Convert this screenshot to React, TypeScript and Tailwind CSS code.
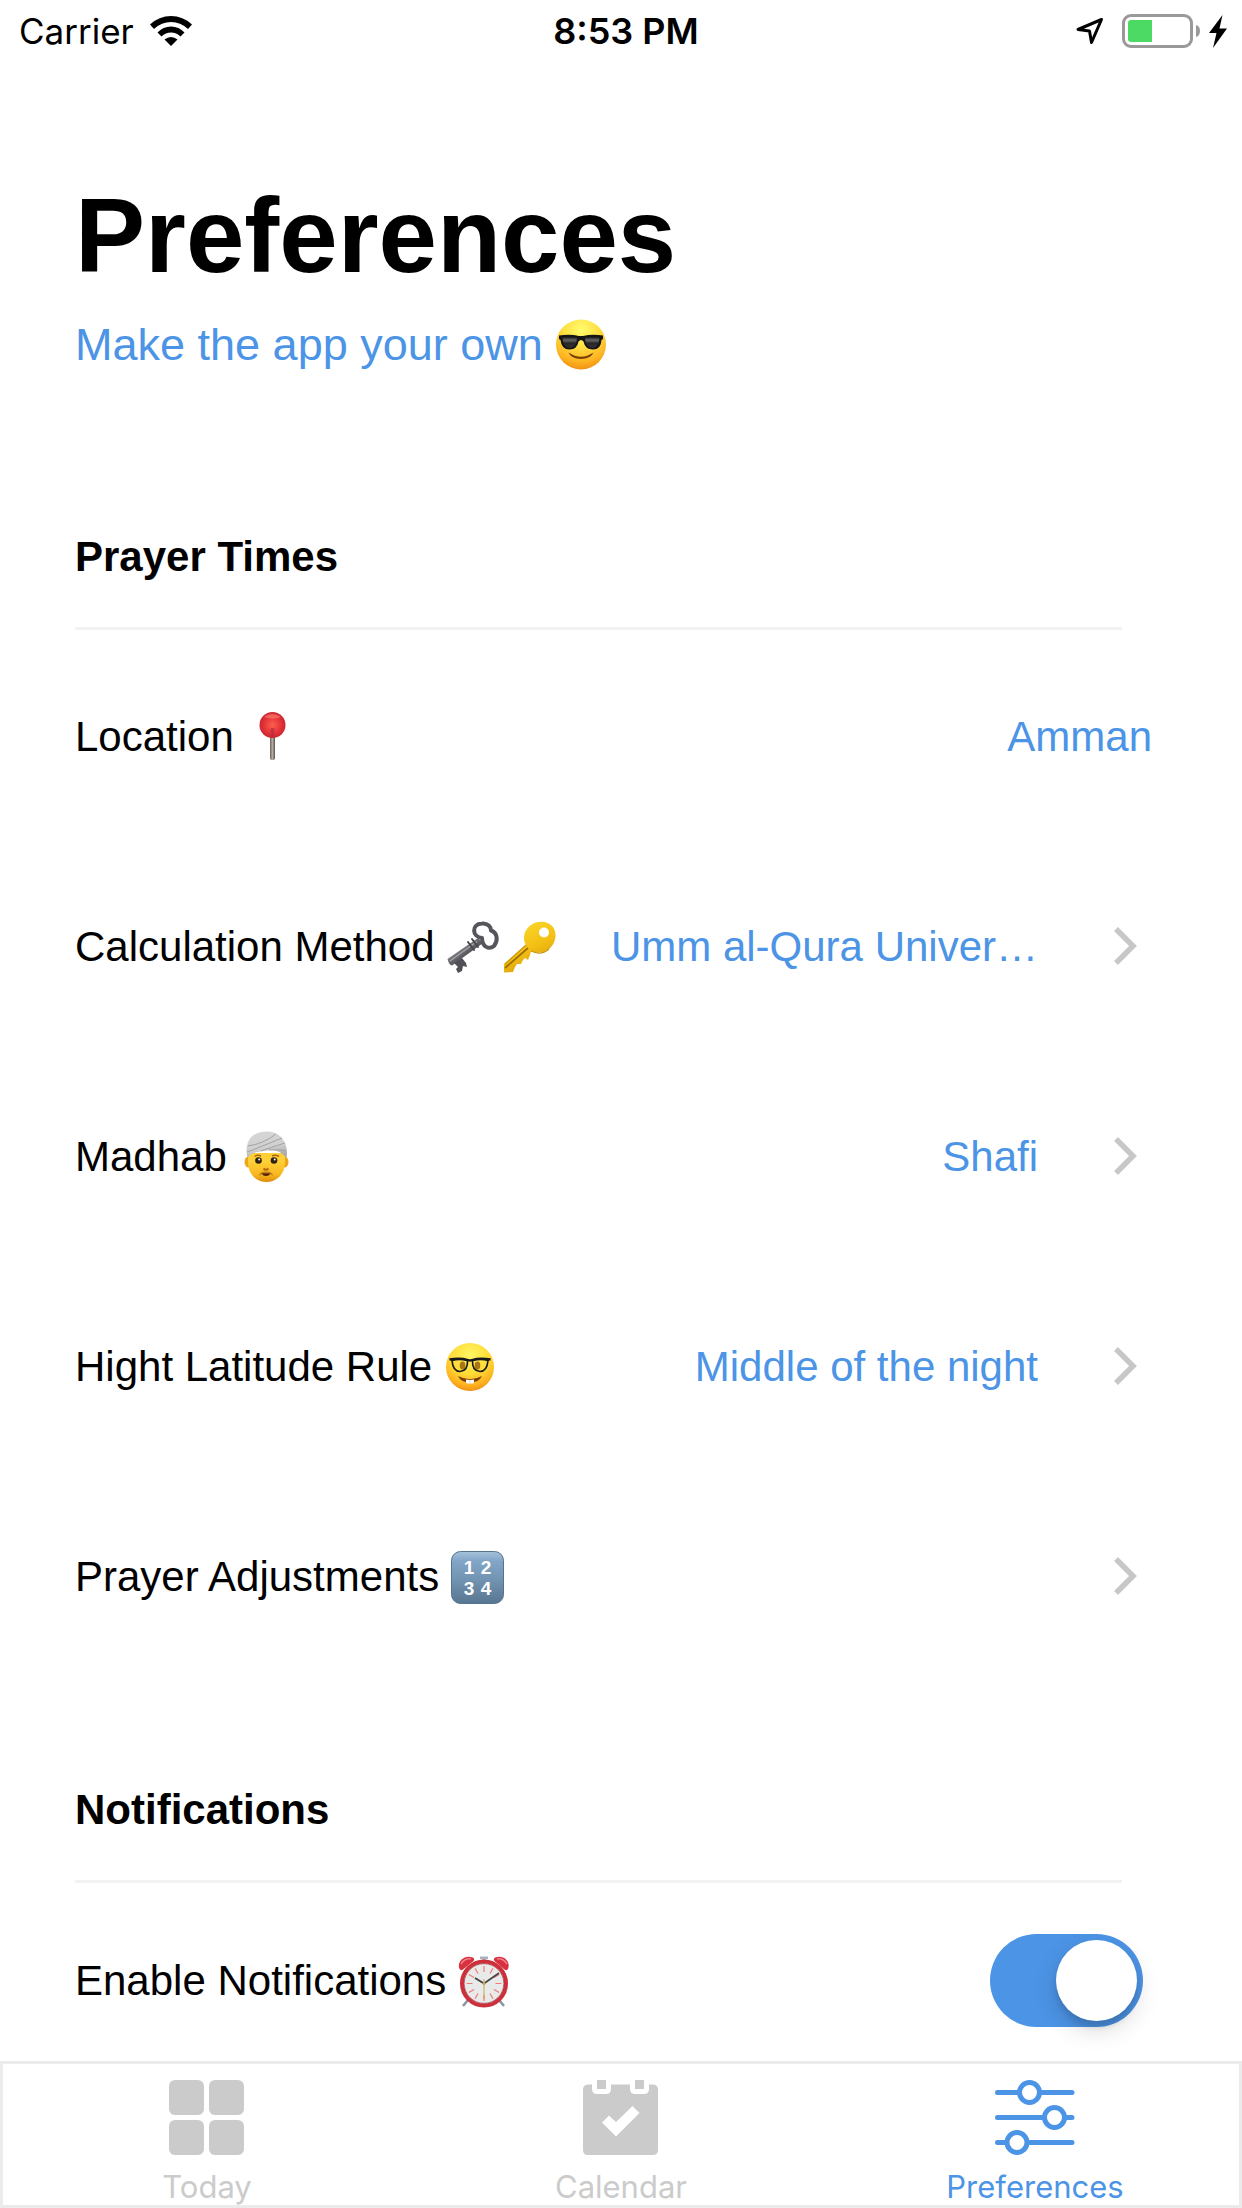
import { useState } from "react";
import type { ReactNode } from "react";

const emojiClass = "h-[52px] w-[52px] shrink-0 overflow-visible";

function Sunglasses() {
  return (
    <svg viewBox="0 0 52 52" className={emojiClass} role="img" aria-label="Smiling face with sunglasses">
      <defs>
        <radialGradient id="sunFace" cx="0.5" cy="0.2" r="0.85">
          <stop offset="0" stopColor="#fffb6e" />
          <stop offset="0.4" stopColor="#ffe043" />
          <stop offset="0.75" stopColor="#fdb522" />
          <stop offset="1" stopColor="#f0860f" />
        </radialGradient>
        <linearGradient id="sunLens" x1="0" y1="0" x2="0" y2="1">
          <stop offset="0" stopColor="#111" />
          <stop offset="0.3" stopColor="#666" />
          <stop offset="0.6" stopColor="#262626" />
          <stop offset="1" stopColor="#333" />
        </linearGradient>
      </defs>
      <circle cx="26" cy="25.500" r="25" fill="url(#sunFace)" />
      <path d="M13.500 33.500Q26 42 38.500 33.500Q36 40 26 40T13.500 33.500Z" fill="#7a3d05" />
      <path d="M4 16.500Q15 14.800 24 17h4Q37 14.800 48 16.500V20l-1.500 1Q46 30.500 38 30.500Q30 30.500 28.500 22.500Q26 19.500 23.500 22.500Q22 30.500 14.500 30.500Q6.500 30.500 5.500 21L4 20Z" fill="#151515" />
      <path d="M7.500 18.500Q15 16.800 22 19Q21.500 28.800 14.500 28.800Q8 28.800 7.500 18.500Z" fill="url(#sunLens)" />
      <path d="M30 19Q37 16.800 44.500 18.500Q44 28.800 37.500 28.800Q30.500 28.800 30 19Z" fill="url(#sunLens)" />
    </svg>
  );
}

function Pin() {
  return (
    <svg viewBox="0 0 52 52" className={emojiClass} role="img" aria-label="Round pushpin">
      <defs>
        <radialGradient id="pinHead" cx="0.5" cy="0.5" r="0.55">
          <stop offset="0" stopColor="#f9604f" />
          <stop offset="0.5" stopColor="#ea3a3a" />
          <stop offset="1" stopColor="#c6202f" />
        </radialGradient>
        <linearGradient id="pinStem" x1="0" x2="1">
          <stop offset="0" stopColor="#6d625a" />
          <stop offset="0.5" stopColor="#b5aaa2" />
          <stop offset="1" stopColor="#5b5049" />
        </linearGradient>
      </defs>
      <rect x="24" y="24" width="5" height="25" rx="2" fill="url(#pinStem)" />
      <circle cx="26.500" cy="14" r="13" fill="url(#pinHead)" />
      <path d="M18 6Q26 0 35 6Q27 9 18 6Z" fill="#ff8b80" opacity="0.55" />
      <rect x="24.500" y="17" width="4" height="9" rx="1.500" fill="#b0283c" opacity="0.6" />
    </svg>
  );
}

function OldKey() {
  return (
    <svg viewBox="0 0 52 52" className={emojiClass} role="img" aria-label="Old key">
      <defs>
        <linearGradient id="oldKeyShaft" x1="0" y1="0" x2="1" y2="1">
          <stop offset="0.3" stopColor="#8b8b90" />
          <stop offset="0.7" stopColor="#3c3c41" />
        </linearGradient>
      </defs>
      <path d="M35 17C25 16 24 3 35 2.500C41 2 44 6 44 9.500C51 12 51 20 47 25C42 29 35 26 35 17Z" fill="none" stroke="#55555b" strokeWidth="4" strokeLinejoin="round" />
      <path d="M0.500 38L31 17L36 22L5 44.500Q2 44 0.500 38Z" fill="url(#oldKeyShaft)" />
      <path d="M3 40L30 20.500" stroke="#a5a5aa" strokeWidth="1.300" />
      <path d="M7 42L15 37L19 42L20 46L16 45L15 50L11 52L9 48L11 46Z" fill="#505057" />
      <path d="M21 21L27 29M25 18L31 26" stroke="#48484e" strokeWidth="2" strokeLinecap="round" />
    </svg>
  );
}

function GoldKey() {
  return (
    <svg viewBox="0 0 52 52" className={emojiClass} role="img" aria-label="Key">
      <defs>
        <linearGradient id="goldKey" x1="0.3" y1="0" x2="0.8" y2="1">
          <stop offset="0" stopColor="#fbd92f" />
          <stop offset="0.5" stopColor="#f3bf13" />
          <stop offset="1" stopColor="#cc9408" />
        </linearGradient>
      </defs>
      <path fillRule="evenodd" d="M20.500 21C19 15 21 8 27 4C34-1 44 0 49 6C54 13 51 23 45 28C39 32.500 31 32 27 30L26 34L24 39L21 37L19 39L17 43L13 43L11 46L9 51L0 51.500V43L22 24ZM45 11.500A5 5 0 1 0 35 11.500A5 5 0 1 0 45 11.500Z" fill="url(#goldKey)" />
      <path d="M1 47L24 27" stroke="#9c6e03" strokeWidth="1.700" />
      <path d="M1 43L22 24M27 30Q37 35 45 28" fill="none" stroke="#c99308" strokeWidth="1.200" />
    </svg>
  );
}

function Turban() {
  return (
    <svg viewBox="0 0 52 52" className={emojiClass} role="img" aria-label="Person wearing turban">
      <defs>
        <linearGradient id="turbanFace" x1="0" y1="0" x2="0" y2="1">
          <stop offset="0.3" stopColor="#ffcf38" />
          <stop offset="0.75" stopColor="#f8b61e" />
          <stop offset="1" stopColor="#dd8c0d" />
        </linearGradient>
        <linearGradient id="turbanCloth" x1="0.3" y1="0" x2="0.6" y2="1">
          <stop offset="0" stopColor="#d6d6d6" />
          <stop offset="0.6" stopColor="#d0d0d0" />
          <stop offset="1" stopColor="#a8a8a8" />
        </linearGradient>
      </defs>
      <ellipse cx="9.500" cy="31" rx="4" ry="5.500" fill="#eda51b" />
      <ellipse cx="45.500" cy="31" rx="4" ry="5.500" fill="#eda51b" />
      <path d="M9 22H46V31C46 43 38 51 27.500 51S9 43 9 31Z" fill="url(#turbanFace)" />
      <path d="M8.500 27C5 14 10 0.500 28 0.500C43 0.500 50 14 47.500 27C42 20 35 18.500 28 19.500C19 20.500 12 21.500 8.500 27Z" fill="url(#turbanCloth)" />
      <path d="M8 21Q19 17 43 7M9 15Q24 13 37 3M30 19Q40 18 47 20M22 20Q36 15 46 12" fill="none" stroke="#9d9d9d" strokeWidth="0.900" />
      <path d="M15.500 25.500Q18.500 23.500 22 25M33 25Q36.500 23.500 40 25.500" fill="none" stroke="#a66b12" strokeWidth="1.500" />
      <circle cx="19.500" cy="29.500" r="3.300" fill="#30200f" />
      <circle cx="35" cy="29.500" r="3.300" fill="#30200f" />
      <circle cx="20.200" cy="28.500" r="1" fill="#fff" />
      <circle cx="35.700" cy="28.500" r="1" fill="#fff" />
      <path d="M24.500 37.500Q27 40 29.500 37.500" fill="none" stroke="#b5670a" strokeWidth="1.900" />
      <path d="M20 45Q20.500 40 27 40.500Q33.500 40 34 45Q31 42 27 42.500Q23 42 20 45Z" fill="#c4821a" />
      <path d="M22.500 42.500Q27 41.800 31.500 42.500Q30 45 27 45T22.500 42.500Z" fill="#552108" />
    </svg>
  );
}

function Nerd() {
  return (
    <svg viewBox="0 0 52 52" className={emojiClass} role="img" aria-label="Nerd face">
      <defs>
        <radialGradient id="nerdFace" cx="0.5" cy="0.25" r="0.8">
          <stop offset="0" stopColor="#fff665" />
          <stop offset="0.5" stopColor="#ffdb35" />
          <stop offset="0.8" stopColor="#fdb01f" />
          <stop offset="1" stopColor="#ea8411" />
        </radialGradient>
      </defs>
      <circle cx="26" cy="26" r="24" fill="url(#nerdFace)" />
      <ellipse cx="18.500" cy="24.500" rx="2.800" ry="4" fill="#8d5409" />
      <ellipse cx="33.500" cy="24.500" rx="2.800" ry="4" fill="#8d5409" />
      <path d="M14 35Q26 41.500 38 35Q35 41.500 26 41.500T14 35Z" fill="#7e3c05" />
      <path d="M22 38.500Q26 39.300 30 38.500V41Q30 42.500 28.500 42.500H23.500Q22 42.500 22 41Z" fill="#fff" />
      <path d="M26 39V42.500" stroke="#ccc" strokeWidth="0.800" />
      <path d="M8 19.500Q15 17.500 23.500 19.500Q24 30 16 30.500Q9 30.500 8 19.500ZM28.500 19.500Q37 17.500 44 19.500Q43 30.500 36 30.500Q28 30 28.500 19.500Z" fill="#ffd83a" fillOpacity="0.25" stroke="#17191c" strokeWidth="1.700" />
      <path d="M5.500 18.500Q16 16.500 24 19Q26 20 28 19Q36 16.500 46.500 18.500" fill="none" stroke="#17191c" strokeWidth="2.300" />
    </svg>
  );
}

function Numbers() {
  return (
    <svg viewBox="0 0 52 52" className={emojiClass} role="img" aria-label="Input numbers">
      <defs>
        <linearGradient id="numBox" x1="0" y1="0" x2="0" y2="1">
          <stop offset="0" stopColor="#a5c2da" />
          <stop offset="0.18" stopColor="#82a6c7" />
          <stop offset="0.5" stopColor="#7496b5" />
          <stop offset="1" stopColor="#587691" />
        </linearGradient>
      </defs>
      <rect x="0.500" y="0.500" width="52" height="52" rx="9" fill="url(#numBox)" stroke="#55738f" />
      <g fill="#fff" fontFamily="Liberation Sans, sans-serif" fontSize="19" fontWeight="700" textAnchor="middle">
        <text x="18" y="23">1</text>
        <text x="35" y="23">2</text>
        <text x="18" y="44">3</text>
        <text x="35" y="44">4</text>
      </g>
    </svg>
  );
}

function AlarmClock() {
  return (
    <svg viewBox="0 0 52 52" className={emojiClass} role="img" aria-label="Alarm clock">
      <path d="M10 45L5 51M41 45L46 51" stroke="#8a949e" strokeWidth="2.500" />
      <path d="M22 1.500H30V4H27.500V8H24.500V4H22Z" fill="#a7b3bf" />
      <path d="M1.500 14C-1.500 7 6 -1 15 2.500Q17 4 15.500 6L5 14.500Q3 16 1.500 14ZM50 14C53 7 46 -1 37 2.500Q35 4 36.500 6L46.500 14.500Q48.500 16 50 14Z" fill="#d9303f" />
      <path d="M3 9Q7 3 13 4M49 9Q45 3 39 4" fill="none" stroke="#f18189" strokeWidth="1.500" />
      <circle cx="26" cy="28.500" r="22" fill="#e9eaea" stroke="#cd303b" strokeWidth="4" />
      <circle cx="26" cy="28.500" r="19.800" fill="none" stroke="#9e2730" strokeWidth="0.600" />
      <g stroke="#f07a74" strokeWidth="1.200">
        <path d="M26 11V17M26 40V46M8.500 28.500H14.500M37.500 28.500H43.500" />
        <path d="M17 13.300L20 18.500M32 38.500L35 43.700M10.800 37.500L16 34.500M36 22.500L41.200 19.500M10.800 19.500L16 22.500M36 34.500L41.200 37.500M17 43.700L20 38.500M32 18.500L35 13.300" />
      </g>
      <path d="M26 28.500L41 18" stroke="#444" strokeWidth="1.600" />
      <path d="M26 28.500L17 23" stroke="#444" strokeWidth="2" />
      <path d="M26 24V44" stroke="#c9a352" strokeWidth="1" />
      <circle cx="26" cy="28.500" r="1.500" fill="#c9a352" />
    </svg>
  );
}

function Chevron() {
  return (
    <svg viewBox="0 0 24 40" className="mr-[15px] ml-[75px] h-10 w-6 shrink-0" fill="none" aria-hidden="true">
      <path d="M3 2L20 19L3 36" stroke="#c7c7c7" strokeWidth="5.500" />
    </svg>
  );
}

function Row({ label, emoji, value, chevron = true }: { label: string; emoji: ReactNode; value?: string; chevron?: boolean }) {
  return (
    <li>
      <button type="button" className="flex h-[210px] w-full items-center text-left text-[42px] leading-[48px]">
        <span className="flex shrink-0 items-center gap-3">
          {label}
          <span className="flex gap-[5px]">{emoji}</span>
        </span>
        <span className="ml-auto truncate text-[#4c94e6]">{value}</span>
        {chevron && <Chevron />}
      </button>
    </li>
  );
}

function SectionHeading({ children }: { children: ReactNode }) {
  return (
    <h2 className="mr-[30px] border-b-[3px] border-[#f2f2f2] pt-[104px] pb-[46px] text-[42px] leading-[48px] font-bold">
      {children}
    </h2>
  );
}

function StatusBar() {
  return (
    <header className="grid h-[62px] grid-cols-3 items-center px-[19px] font-['Inter',sans-serif] text-[35px] leading-[42px]">
      <div className="flex items-center gap-4">
        Carrier
        <svg viewBox="0 0 42 30" className="h-[30px] w-[42px]" role="img" aria-label="Wi-Fi">
          <path d="M0 8.500Q9 0 21 0T42 8.500L38 13Q30.500 6 21 6T4 13Z" />
          <path d="M7.500 16.500Q13 10.500 21 10.500T34.500 16.500L30.500 20.500Q26.500 16.500 21 16.500T11.500 20.500Z" />
          <path d="M14.500 23.500Q17.500 21 21 21T27.500 23.500L21 30Z" />
        </svg>
      </div>
      <time className="pl-2.5 text-center text-[36px] font-semibold">8:53 PM</time>
      <div className="-mr-1 flex items-center justify-end">
        <svg viewBox="0 0 28 28" className="mr-[18px] h-7 w-7" fill="none" role="img" aria-label="Location in use">
          <path d="M25.500 2.500L2 12.500L13.500 14L15.500 25.500Z" stroke="#000" strokeWidth="3" strokeLinejoin="round" />
        </svg>
        <svg viewBox="0 0 78 34" className="h-[34px] w-[78px]" role="img" aria-label="Battery">
          <rect x="1.500" y="1.500" width="68" height="31" rx="7.500" fill="none" stroke="#999" strokeWidth="3" />
          <path d="M9 6H30V28H9Q6 28 6 25V9Q6 6 9 6Z" fill="#4cd964" />
          <path d="M74 11Q78 12 78 17T74 23Z" fill="#999" />
        </svg>
        <svg viewBox="0 0 18 33" className="ml-[9px] h-[33px] w-[18px]" role="img" aria-label="Charging">
          <path d="M13.500 0L0 18H7.500L4 33L18 13.500H10.500Z" />
        </svg>
      </div>
    </header>
  );
}

function Tab({ label, active = false, icon }: { label: string; active?: boolean; icon: ReactNode }) {
  return (
    <a
      href={"#" + label.toLowerCase()}
      aria-current={active ? "page" : undefined}
      className={"flex flex-1 flex-col items-center gap-[14px] pt-[19px] " + (active ? "text-[#4c94e6]" : "text-[#cbcbcb]")}
    >
      {icon}
      <span>{label}</span>
    </a>
  );
}

const tabIconClass = "h-[75px] w-[81px]";

export default function App() {
  const [enabled, setEnabled] = useState(true);
  return (
    <div className="flex min-h-screen flex-col bg-white font-['Liberation_Sans',Arial,sans-serif] text-black">
      <StatusBar />
      <main className="flex-1 pt-[114px] pr-[90px] pl-[75px]">
        <h1 className="text-[105px] leading-[120px] font-bold">Preferences</h1>
        <p className="mt-[23px] mb-[58px] flex items-center gap-3 text-[45px] leading-[52px] text-[#4c94e6]">
          Make the app your own
          <Sunglasses />
        </p>
        <section>
          <SectionHeading>Prayer Times</SectionHeading>
          <ul className="pt-0.5">
            <Row label="Location" emoji={<Pin />} value="Amman" chevron={false} />
            <Row
              label="Calculation Method"
              emoji={
                <>
                  <OldKey />
                  <GoldKey />
                </>
              }
              value="Umm al-Qura Univer…"
            />
            <Row label="Madhab" emoji={<Turban />} value="Shafi" />
            <Row label="Hight Latitude Rule" emoji={<Nerd />} value="Middle of the night" />
            <Row label="Prayer Adjustments" emoji={<Numbers />} />
          </ul>
        </section>
        <section>
          <SectionHeading>Notifications</SectionHeading>
          <div className="flex items-center justify-between pt-[51px] pr-[9px] pb-[33px] text-[42px] leading-[48px]">
            <label htmlFor="enable-notifications" className="flex items-center gap-3">
              Enable Notifications
              <AlarmClock />
            </label>
            <input
              id="enable-notifications"
              type="checkbox"
              role="switch"
              checked={enabled}
              onChange={(e) => setEnabled(e.target.checked)}
              className="h-[93px] w-[153px] appearance-none rounded-full bg-gray-200 p-1.5 before:block before:h-[81px] before:w-[81px] before:rounded-full before:bg-white before:shadow-[0_9px_24px_rgba(0,0,0,0.15),0_6px_6px_rgba(0,0,0,0.12)] checked:bg-[#4c94e6] checked:before:translate-x-[60px]"
            />
          </div>
        </section>
      </main>
      <nav className="sticky bottom-0 flex h-[147px] bg-white font-['Inter',sans-serif] text-[31px] leading-9 shadow-[inset_0_0_0_3px_#ebebeb]">
        <Tab
          label="Today"
          icon={
            <svg viewBox="1 0 81 75" className={tabIconClass} fill="currentColor" aria-hidden="true">
              <rect x="3" y="0" width="35" height="35" rx="6" />
              <rect x="43" y="0" width="35" height="35" rx="6" />
              <rect x="3" y="40" width="35" height="35" rx="6" />
              <rect x="43" y="40" width="35" height="35" rx="6" />
            </svg>
          }
        />
        <Tab
          label="Calendar"
          icon={
            <svg viewBox="1 0 81 75" className={tabIconClass} fill="currentColor" aria-hidden="true">
              <path d="M8 4.500H12V9Q12 14 17 14H26Q31 14 31 9V4.500H50V9Q50 14 55 14H64Q69 14 69 9V4.500H73Q78 5 78 9.500V70Q78 75 73 75H8Q3 75 3 70V9.500Q3 5 8 4.500Z" />
              <rect x="17" y="0" width="9" height="9" />
              <rect x="55" y="0" width="9" height="9" />
              <path d="M22 42.500L29 35.500L36 42L52.500 26L59.500 33L36 56.500Z" fill="#fff" />
            </svg>
          }
        />
        <Tab
          label="Preferences"
          active
          icon={
            <svg viewBox="1 0 81 75" className={tabIconClass} fill="none" stroke="currentColor" strokeWidth="5" strokeLinecap="round" aria-hidden="true">
              <path d="M3.500 12.500H24M48 12.500H78M3.500 37.500H49M73 37.500H78M3.500 62.500H12M36 62.500H78" />
              <circle cx="35.500" cy="12.500" r="10" />
              <circle cx="60.500" cy="37.500" r="10" />
              <circle cx="23" cy="62.500" r="10" />
            </svg>
          }
        />
      </nav>
    </div>
  );
}
